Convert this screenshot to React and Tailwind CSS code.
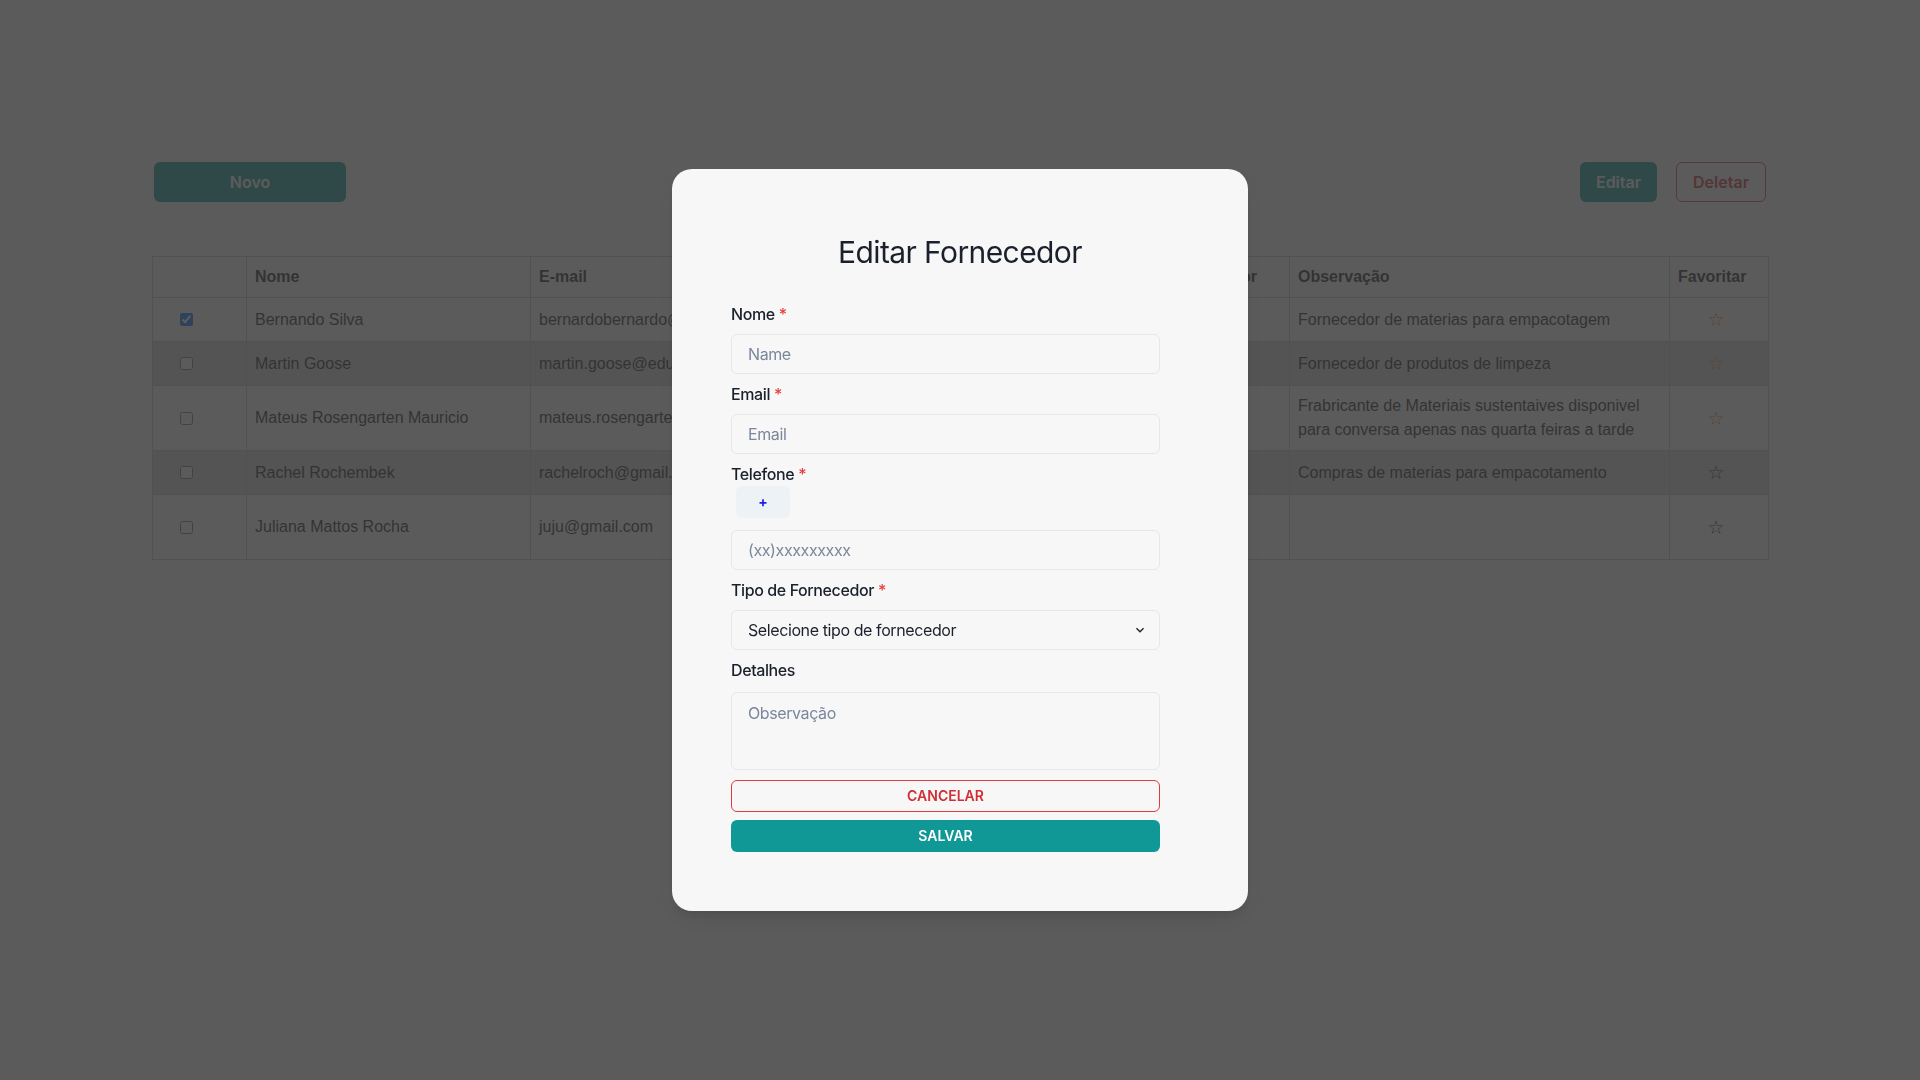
import React from 'react';

const FORNECEDORES = [
  {
    nome: 'Bernando Silva',
    email: 'bernardobernardo@gmail.com',
    telefone: '(11)998877665',
    tipo: 'Embalagens',
    obs: 'Fornecedor de materias para empacotagem',
    fav: true,
    checked: true,
  },
  {
    nome: 'Martin Goose',
    email: 'martin.goose@edu.com.br',
    telefone: '(21)987654321',
    tipo: 'Limpeza',
    obs: 'Fornecedor de produtos de limpeza',
    fav: true,
  },
  {
    nome: 'Mateus Rosengarten Mauricio',
    email: 'mateus.rosengarten@gmail.com',
    telefone: '(31)912345678',
    tipo: 'Materiais',
    obs: 'Frabricante de Materiais sustentaives disponivel para conversa apenas nas quarta feiras a tarde',
    fav: true,
  },
  {
    nome: 'Rachel Rochembek',
    email: 'rachelroch@gmail.com',
    telefone: '(41)923456789',
    tipo: 'Embalagens',
    obs: 'Compras de materias para empacotamento',
    fav: false,
  },
  {
    nome: 'Juliana Mattos Rocha',
    email: 'juju@gmail.com',
    telefone: '(51)934567890',
    tipo: 'Serviços',
    obs: '',
    fav: false,
    tall: true,
  },
];

const cell = 'border border-[#c8c8c8] px-2 py-2 align-middle';

function Label({ children, required }) {
  return (
    <label className="block text-base leading-6 font-medium tracking-[-0.025em] text-[#1a202c]">
      {children}
      {required && <span className="ml-1 text-[#e53e3e]">*</span>}
    </label>
  );
}

const inputCls =
  'block w-full h-10 px-4 rounded-md border border-[#e2e8f0] bg-transparent text-base tracking-[-0.025em] text-[#1a202c] placeholder:text-[#7b879c] outline-none';

function EditModal() {
  return (
    <div className="fixed inset-0 z-50 flex items-center justify-center bg-[rgba(55,55,55,0.82)]">
      <div
        className="w-[576px] h-[742px] rounded-[20px] bg-[#f7f7f7] px-[59px] pt-[65px] shadow-lg"
        style={{ fontFamily: 'Inter, "Noto Sans", sans-serif' }}
      >
        <h2 className="text-center text-[30px] leading-9 font-normal tracking-[-0.02em] text-[#1a202c]">
          Editar Fornecedor
        </h2>

        <form className="w-[429px] mt-8">
          <Label required>Nome</Label>
          <input className={`${inputCls} mt-2`} placeholder="Name" />

          <div className="mt-2">
            <Label required>Email</Label>
          </div>
          <input className={`${inputCls} mt-2`} placeholder="Email" />

          <div className="mt-2">
            <Label required>Telefone</Label>
          </div>
          <div className="ml-[5px] w-[54px] h-8 rounded-md bg-[#edf2f7] flex items-center justify-center text-[#1f1fe0] font-bold text-sm">
            +
          </div>
          <input className={`${inputCls} mt-3`} placeholder="(xx)xxxxxxxxx" />

          <div className="mt-2">
            <Label required>Tipo de Fornecedor</Label>
          </div>
          <div className="relative mt-2">
            <select className={`${inputCls} appearance-none pr-10`} defaultValue="">
              <option value="">Selecione tipo de fornecedor</option>
            </select>
            <svg className="absolute right-3 top-3 h-4 w-4 pointer-events-none" viewBox="0 0 24 24" fill="#1a202c">
              <path d="M16.59 8.59L12 13.17 7.41 8.59 6 10l6 6 6-6z" />
            </svg>
          </div>

          <div className="mt-2">
            <Label>Detalhes</Label>
          </div>
          <textarea
            className="block w-full h-[78px] mt-[10px] px-4 py-2 rounded-md border border-[#e2e8f0] bg-transparent text-base tracking-[-0.025em] text-[#1a202c] placeholder:text-[#7b879c] outline-none resize-none"
            placeholder="Observação"
          />

          <button
            type="button"
            className="mt-[10px] w-full h-8 rounded-md border border-[#e03a3e] text-[#d12f36] text-sm font-semibold uppercase"
          >
            Cancelar
          </button>
          <button
            type="button"
            className="mt-2 w-full h-8 rounded-md bg-[#0f9896] text-white text-sm font-semibold uppercase"
          >
            Salvar
          </button>
        </form>
      </div>
    </div>
  );
}

export default function App() {
  return (
    <div className="min-h-screen bg-white">
      <div className="w-[1616px] mx-auto pt-[162px]">
        {/* Action bar */}
        <div className="flex items-center justify-between px-[2px]" style={{ fontFamily: 'Inter, sans-serif' }}>
          <button type="button" className="w-[192px] h-10 rounded-md bg-[#0f9896] text-white font-semibold">
            Novo
          </button>
          <div className="flex items-center gap-[19px]">
            <button type="button" className="h-10 px-4 rounded-md bg-[#0f9896] text-white font-semibold">
              Editar
            </button>
            <button
              type="button"
              className="h-10 px-4 rounded-md border border-[#e03a3e] text-[#d12f36] font-semibold"
            >
              Deletar
            </button>
          </div>
        </div>

        {/* Suppliers table */}
        <table
          className="mt-[54px] w-full table-fixed border-collapse text-base leading-6 text-[#212529]"
          style={{ fontFamily: '"Liberation Sans", Arial, sans-serif' }}
        >
          <colgroup>
            <col className="w-[94px]" />
            <col className="w-[284px]" />
            <col className="w-[320px]" />
            <col className="w-[249px]" />
            <col className="w-[190px]" />
            <col className="w-[380px]" />
            <col className="w-[99px]" />
          </colgroup>
          <thead>
            <tr className="text-left font-bold">
              <th className={cell}></th>
              <th className={cell}>Nome</th>
              <th className={cell}>E-mail</th>
              <th className={cell}>Telefone</th>
              <th className={cell}>Tipo de Fornecedor</th>
              <th className={cell}>Observação</th>
              <th className={cell}>Favoritar</th>
            </tr>
          </thead>
          <tbody>
            {FORNECEDORES.map((f, i) => (
              <tr key={f.nome} className={`${i % 2 === 1 ? 'bg-[#d9d9d9]' : ''} ${f.tall ? 'h-[65px]' : ''}`}>
                <td className={`${cell} pl-[27px]`}>
                  <input type="checkbox" defaultChecked={!!f.checked} className="m-0 block w-[13px] h-[13px]" />
                </td>
                <td className={cell}>{f.nome}</td>
                <td className={`${cell} truncate`}>{f.email}</td>
                <td className={cell}>{f.telefone}</td>
                <td className={cell}>{f.tipo}</td>
                <td className={cell}>{f.obs}</td>
                <td className={`${cell} text-center pr-[14px]`}>
                  <span
                    className={`inline-block text-[19px] leading-[27px] ${f.fav ? 'text-[#ff7a1f]' : 'text-[#212529]'}`}
                    style={{ fontFamily: '"DejaVu Sans", sans-serif' }}
                  >
                    ☆
                  </span>
                </td>
              </tr>
            ))}
          </tbody>
        </table>
      </div>

      <EditModal />
    </div>
  );
}
